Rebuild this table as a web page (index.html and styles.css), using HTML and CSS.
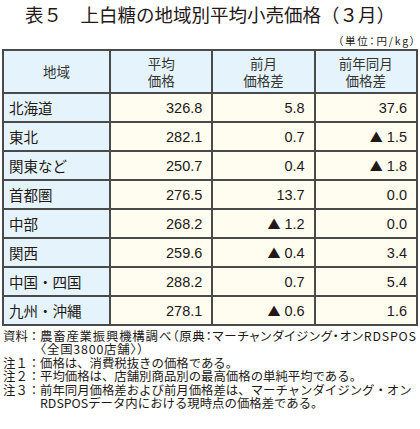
FILE: index.html
```html
<!DOCTYPE html>
<html lang="ja">
<head>
    <meta charset="UTF-8">
    <title>上白糖の地域別平均小売価格</title>
    <link rel="stylesheet" href="styles.css">
</head>
<body>
    <h1 class="title">表５　上白糖の地域別平均小売価格（３月）</h1>
    <div class="unit">（単位：円/kg）</div>

    <table class="prices">
        <colgroup>
            <col class="col-area">
            <col>
            <col>
            <col>
        </colgroup>
        <thead>
            <tr>
                <th>地域</th>
                <th>平均<br>価格</th>
                <th>前月<br>価格差</th>
                <th>前年同月<br>価格差</th>
            </tr>
        </thead>
        <tbody>
            <tr><td class="area">北海道</td><td>326.8</td><td>5.8</td><td>37.6</td></tr>
            <tr><td class="area">東北</td><td>282.1</td><td>0.7</td><td><span class="minus">▲</span> 1.5</td></tr>
            <tr><td class="area">関東など</td><td>250.7</td><td>0.4</td><td><span class="minus">▲</span> 1.8</td></tr>
            <tr><td class="area">首都圏</td><td>276.5</td><td>13.7</td><td>0.0</td></tr>
            <tr><td class="area">中部</td><td>268.2</td><td><span class="minus">▲</span> 1.2</td><td>0.0</td></tr>
            <tr><td class="area">関西</td><td>259.6</td><td><span class="minus">▲</span> 0.4</td><td>3.4</td></tr>
            <tr><td class="area">中国・四国</td><td>288.2</td><td>0.7</td><td>5.4</td></tr>
            <tr><td class="area">九州・沖縄</td><td>278.1</td><td><span class="minus">▲</span> 0.6</td><td>1.6</td></tr>
        </tbody>
    </table>

    <div class="notes">
        <div class="note">
            <span class="label">資料：</span>
            <span class="text"><span class="tight">農畜産業振興機構調べ（原典：マーチャンダイジング・オンRDSPOS</span><br><span class="tight">〈全国3800店舗〉）</span></span>
        </div>
        <div class="note">
            <span class="label">注１：</span>
            <span class="text">価格は、消費税抜きの価格である。</span>
        </div>
        <div class="note">
            <span class="label">注２：</span>
            <span class="text">平均価格は、店舗別商品別の最高価格の単純平均である。</span>
        </div>
        <div class="note">
            <span class="label">注３：</span>
            <span class="text">前年同月価格差および前月価格差は、マーチャンダイジング・オン<br>RDSPOSデータ内における現時点の価格差である。</span>
        </div>
    </div>
</body>
</html>
```

FILE: styles.css
```css
* {
    box-sizing: border-box;
}
body {
    margin: 0;
    background: #ffffff;
    color: #231815;
    font-family: "Noto Sans CJK JP", sans-serif;
}
.title {
    margin: 0;
    padding-top: 3px;
    font-size: 18.5px;
    line-height: 22px;
    font-weight: 400;
    text-align: center;
}
.unit {
    margin-top: 10px;
    padding-right: 3px;
    font-size: 10.5px;
    line-height: 12px;
    letter-spacing: 1.8px;
    text-align: right;
    font-feature-settings: "palt";
}
.prices {
    margin: 2px 2px 0;
    width: 416px;
    table-layout: fixed;
    border-collapse: collapse;
    border: 2px solid #4a4a4a;
}
.col-area {
    width: 107px;
}
.prices th,
.prices td {
    border: 2px solid #4a4a4a;
    padding: 0 9px;
}
.prices th {
    height: 43px;
    background: #e5f4fc;
    color: #333333;
    font-size: 13.5px;
    line-height: 17px;
    font-weight: 400;
    text-align: center;
}
.prices td {
    height: 29px;
    background: #fffdf0;
    font-family: "Liberation Sans", Arial, sans-serif;
    font-size: 14.5px;
    text-align: right;
}
.prices td.area {
    padding: 0 5px;
    background: #e5f4fc;
    font-family: "Noto Sans CJK JP", sans-serif;
    font-size: 14.5px;
    text-align: left;
}
.minus {
    font-family: "Noto Sans CJK JP", sans-serif;
    font-size: 13px;
}
.notes {
    margin-top: 4px;
    padding-left: 3px;
    font-size: 12.4px;
    line-height: 13.4px;
    white-space: nowrap;
}
.note {
    display: flex;
}
.note .label {
    width: 37px;
    flex: none;
}
.tight {
    font-feature-settings: "palt";
    letter-spacing: 0.8px;
}
```
